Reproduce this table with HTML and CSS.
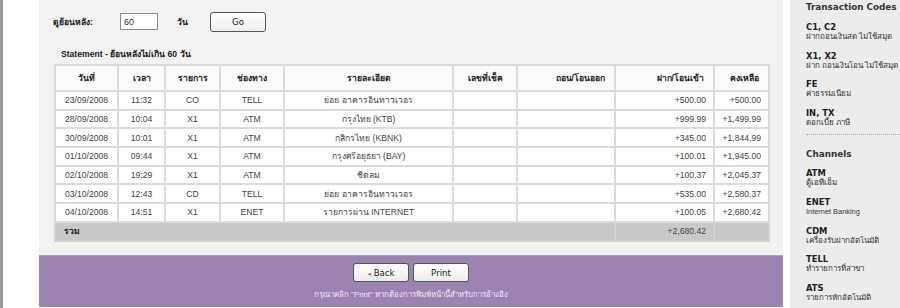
FILE: index.html
```html
<!DOCTYPE html>
<html lang="th">
<head>
<meta charset="utf-8">
<title>Statement</title>
<link rel="stylesheet" href="styles.css">
</head>
<body>
<div class="page">
  <div class="gutter"></div>
  <div class="main">
    <div class="content">
      <div class="search">
        <span class="lbl">ดูย้อนหลัง:</span>
        <input class="days" type="text" value="60">
        <span class="lbl unit">วัน</span>
        <button class="btn go">Go</button>
      </div>
      <div class="caption">Statement - ย้อนหลังไม่เกิน 60 วัน</div>
      <table class="stmt">
        <colgroup>
          <col class="c1"><col class="c2"><col class="c3"><col class="c4"><col class="c5"><col class="c6"><col class="c7"><col class="c8"><col class="c9">
        </colgroup>
        <thead>
          <tr>
            <th>วันที่</th><th>เวลา</th><th>รายการ</th><th>ช่องทาง</th><th>รายละเอียด</th><th>เลขที่เช็ค</th><th class="r">ถอน/โอนออก</th><th class="r">ฝาก/โอนเข้า</th><th class="r">คงเหลือ</th>
          </tr>
        </thead>
        <tbody>
          <tr><td>23/09/2008</td><td>11:32</td><td>CO</td><td>TELL</td><td>ย่อย อาคารอินทาวเวอร</td><td></td><td></td><td class="r">+500.00</td><td class="r">+500.00</td></tr>
          <tr><td>28/09/2008</td><td>10:04</td><td>X1</td><td>ATM</td><td>กรุงไทย (KTB)</td><td></td><td></td><td class="r">+999.99</td><td class="r">+1,499.99</td></tr>
          <tr><td>30/09/2008</td><td>10:01</td><td>X1</td><td>ATM</td><td>กสิกรไทย (KBNK)</td><td></td><td></td><td class="r">+345.00</td><td class="r">+1,844.99</td></tr>
          <tr><td>01/10/2008</td><td>09:44</td><td>X1</td><td>ATM</td><td>กรุงศรีอยุธยา (BAY)</td><td></td><td></td><td class="r">+100.01</td><td class="r">+1,945.00</td></tr>
          <tr><td>02/10/2008</td><td>19:29</td><td>X1</td><td>ATM</td><td>ชิดลม</td><td></td><td></td><td class="r">+100.37</td><td class="r">+2,045.37</td></tr>
          <tr><td>03/10/2008</td><td>12:43</td><td>CD</td><td>TELL</td><td>ย่อย อาคารอินทาวเวอร</td><td></td><td></td><td class="r">+535.00</td><td class="r">+2,580.37</td></tr>
          <tr><td>04/10/2008</td><td>14:51</td><td>X1</td><td>ENET</td><td>รายการผ่าน INTERNET</td><td></td><td></td><td class="r">+100.05</td><td class="r">+2,680.42</td></tr>
        </tbody>
        <tfoot>
          <tr><td colspan="6" class="sum">รวม</td><td></td><td class="r">+2,680.42</td><td></td></tr>
        </tfoot>
      </table>
    </div>
    <div class="footer">
      <div class="btns">
        <button class="btn fbtn"><span class="arrow">&#9666;</span> Back</button>
        <button class="btn fbtn">Print</button>
      </div>
      <div class="note">กรุณาคลิก "Print" หากต้องการพิมพ์หน้านี้สำหรับการอ้างอิง</div>
    </div>
  </div>
  <div class="sep"></div>
  <aside class="side">
    <div class="head">Transaction Codes</div>
    <div class="item"><div class="code">C1, C2</div><div class="desc">ฝากถอนเงินสด ไม่ใช้สมุด</div></div>
    <div class="item"><div class="code">X1, X2</div><div class="desc">ฝาก ถอนเงินโอน ไม่ใช้สมุด</div></div>
    <div class="item"><div class="code">FE</div><div class="desc">ค่าธรรมเนียม</div></div>
    <div class="item"><div class="code">IN, TX</div><div class="desc">ดอกเบี้ย ภาษี</div></div>
    <div class="rule"></div>
    <div class="head ch">Channels</div>
    <div class="item"><div class="code">ATM</div><div class="desc">ตู้เอทีเอ็ม</div></div>
    <div class="item"><div class="code">ENET</div><div class="desc latin">Internet Banking</div></div>
    <div class="item"><div class="code">CDM</div><div class="desc">เครื่องรับฝากอัตโนมัติ</div></div>
    <div class="item"><div class="code">TELL</div><div class="desc">ทำรายการที่สาขา</div></div>
    <div class="item"><div class="code">ATS</div><div class="desc">รายการหักอัตโนมัติ</div></div>
  </aside>
</div>
</body>
</html>
```

FILE: styles.css
```css
html, body {
  margin: 0;
  padding: 0;
  background: #ffffff;
}
body {
  font-family: Tahoma, "Liberation Sans", "Noto Sans", sans-serif;
  color: #333;
  overflow: hidden;
}
.page {
  display: flex;
  width: 900px;
  height: 308px;
  align-items: flex-start;
}
.gutter {
  width: 36px;
  height: 308px;
  border-left: 3px solid #9a9a9a;
  background: #fff;
  flex: none;
}
.main {
  width: 744px;
  flex: none;
  display: flex;
  flex-direction: column;
}
.content {
  background: #f2f2f2;
  height: 255px;
  box-sizing: border-box;
  padding: 12px 15px 0 15px;
}
.search {
  display: flex;
  align-items: center;
  height: 19px;
}
.lbl {
  font-weight: bold;
  font-size: 8.6px;
  color: #222;
  margin-left: -1px;
  width: 67px;
  padding-top: 1px;
}
.unit {
  width: 33px;
  margin-left: 19px;
}
.days {
  width: 38px;
  height: 17px;
  box-sizing: border-box;
  border: 1px solid #8c8c8c;
  background: #fff;
  padding: 0 3px;
  font-family: "Liberation Sans", sans-serif;
  font-size: 9px;
  color: #333;
  margin: 0;
  outline: none;
}
.btn {
  font-family: "DejaVu Sans", Verdana, sans-serif;
  font-size: 8.6px;
  color: #222;
  border: 1px solid #555;
  border-radius: 3px;
  background: linear-gradient(#ffffff, #ececec);
  padding: 0;
  margin: 0;
  cursor: pointer;
}
.go {
  width: 56px;
  height: 20px;
}
.caption {
  font-weight: bold;
  font-size: 8.6px;
  color: #222;
  margin: 17px 0 0 7px;
  line-height: 12px;
  height: 16px;
}
.stmt {
  width: 714px;
  border-collapse: collapse;
  table-layout: fixed;
  border: 2px solid #d6d6d6;
  font-family: "Liberation Sans", Tahoma, sans-serif;
  font-size: 8.6px;
  color: #444;
}
.c1 { width: 63px; }
.c2 { width: 47px; }
.c3 { width: 55px; }
.c4 { width: 64px; }
.c5 { width: 169px; }
.c6 { width: 64px; }
.c7 { width: 98px; }
.c8 { width: 99px; }
.c9 { width: 55px; }
.stmt th, .stmt td {
  border: 2px solid #dcdcdc;
  background: #ffffff;
  text-align: center;
  padding: 0 7px;
  white-space: nowrap;
  overflow: hidden;
}
.stmt th {
  height: 24px;
  font-family: Tahoma, "Liberation Sans", sans-serif;
  font-weight: bold;
  color: #222;
  background: #fbfbfb;
}
.stmt th.r { padding-right: 9px; }
.stmt tbody td {
  height: 16.7px;
}
.stmt .r {
  text-align: right;
}
.stmt tfoot td {
  background: #c9c9c9;
  border-color: #d2d2d2;
  height: 17px;
  color: #444;
}
.stmt tfoot td.sum {
  text-align: left;
  font-weight: bold;
  color: #222;
  padding-left: 8px;
  border-right-color: #c9c9c9;
}
.footer {
  background: #9b83b1;
  height: 52px;
  border-top: 1px solid #b3a2c2;
  box-sizing: border-box;
  display: flex;
  flex-direction: column;
  align-items: center;
  padding-top: 7px;
}
.btns {
  display: flex;
  gap: 4px;
}
.fbtn {
  width: 56px;
  height: 19px;
  font-size: 8.6px;
}
.arrow {
  color: #888;
  font-size: 7px;
}
.note {
  margin-top: 7px;
  font-size: 7.8px;
  color: #efe9f4;
  line-height: 12px;
}
.sep {
  width: 7px;
  flex: none;
}
.side {
  width: 110px;
  height: 308px;
  flex: none;
  background: #ececec;
  box-sizing: border-box;
  padding: 1px 0 0 16px;
  overflow: hidden;
  white-space: nowrap;
}
.head {
  font-family: "DejaVu Sans", Verdana, sans-serif;
  font-weight: bold;
  font-size: 8.8px;
  color: #333;
  line-height: 12px;
  margin-bottom: 9px;
}
.ch {
  margin-top: 13px;
  margin-bottom: 8px;
}
.item {
  height: 28.6px;
}
.code {
  font-family: "DejaVu Sans", Verdana, sans-serif;
  font-weight: bold;
  font-size: 8.4px;
  color: #222;
  line-height: 10px;
}
.desc {
  font-size: 8px;
  color: #333;
  line-height: 10px;
}
.desc.latin {
  font-family: "Liberation Sans", sans-serif;
  font-size: 7.4px;
}
.rule {
  border-top: 1px dotted #a8a8a8;
  margin: -2px -10px 0 0;
}
```
